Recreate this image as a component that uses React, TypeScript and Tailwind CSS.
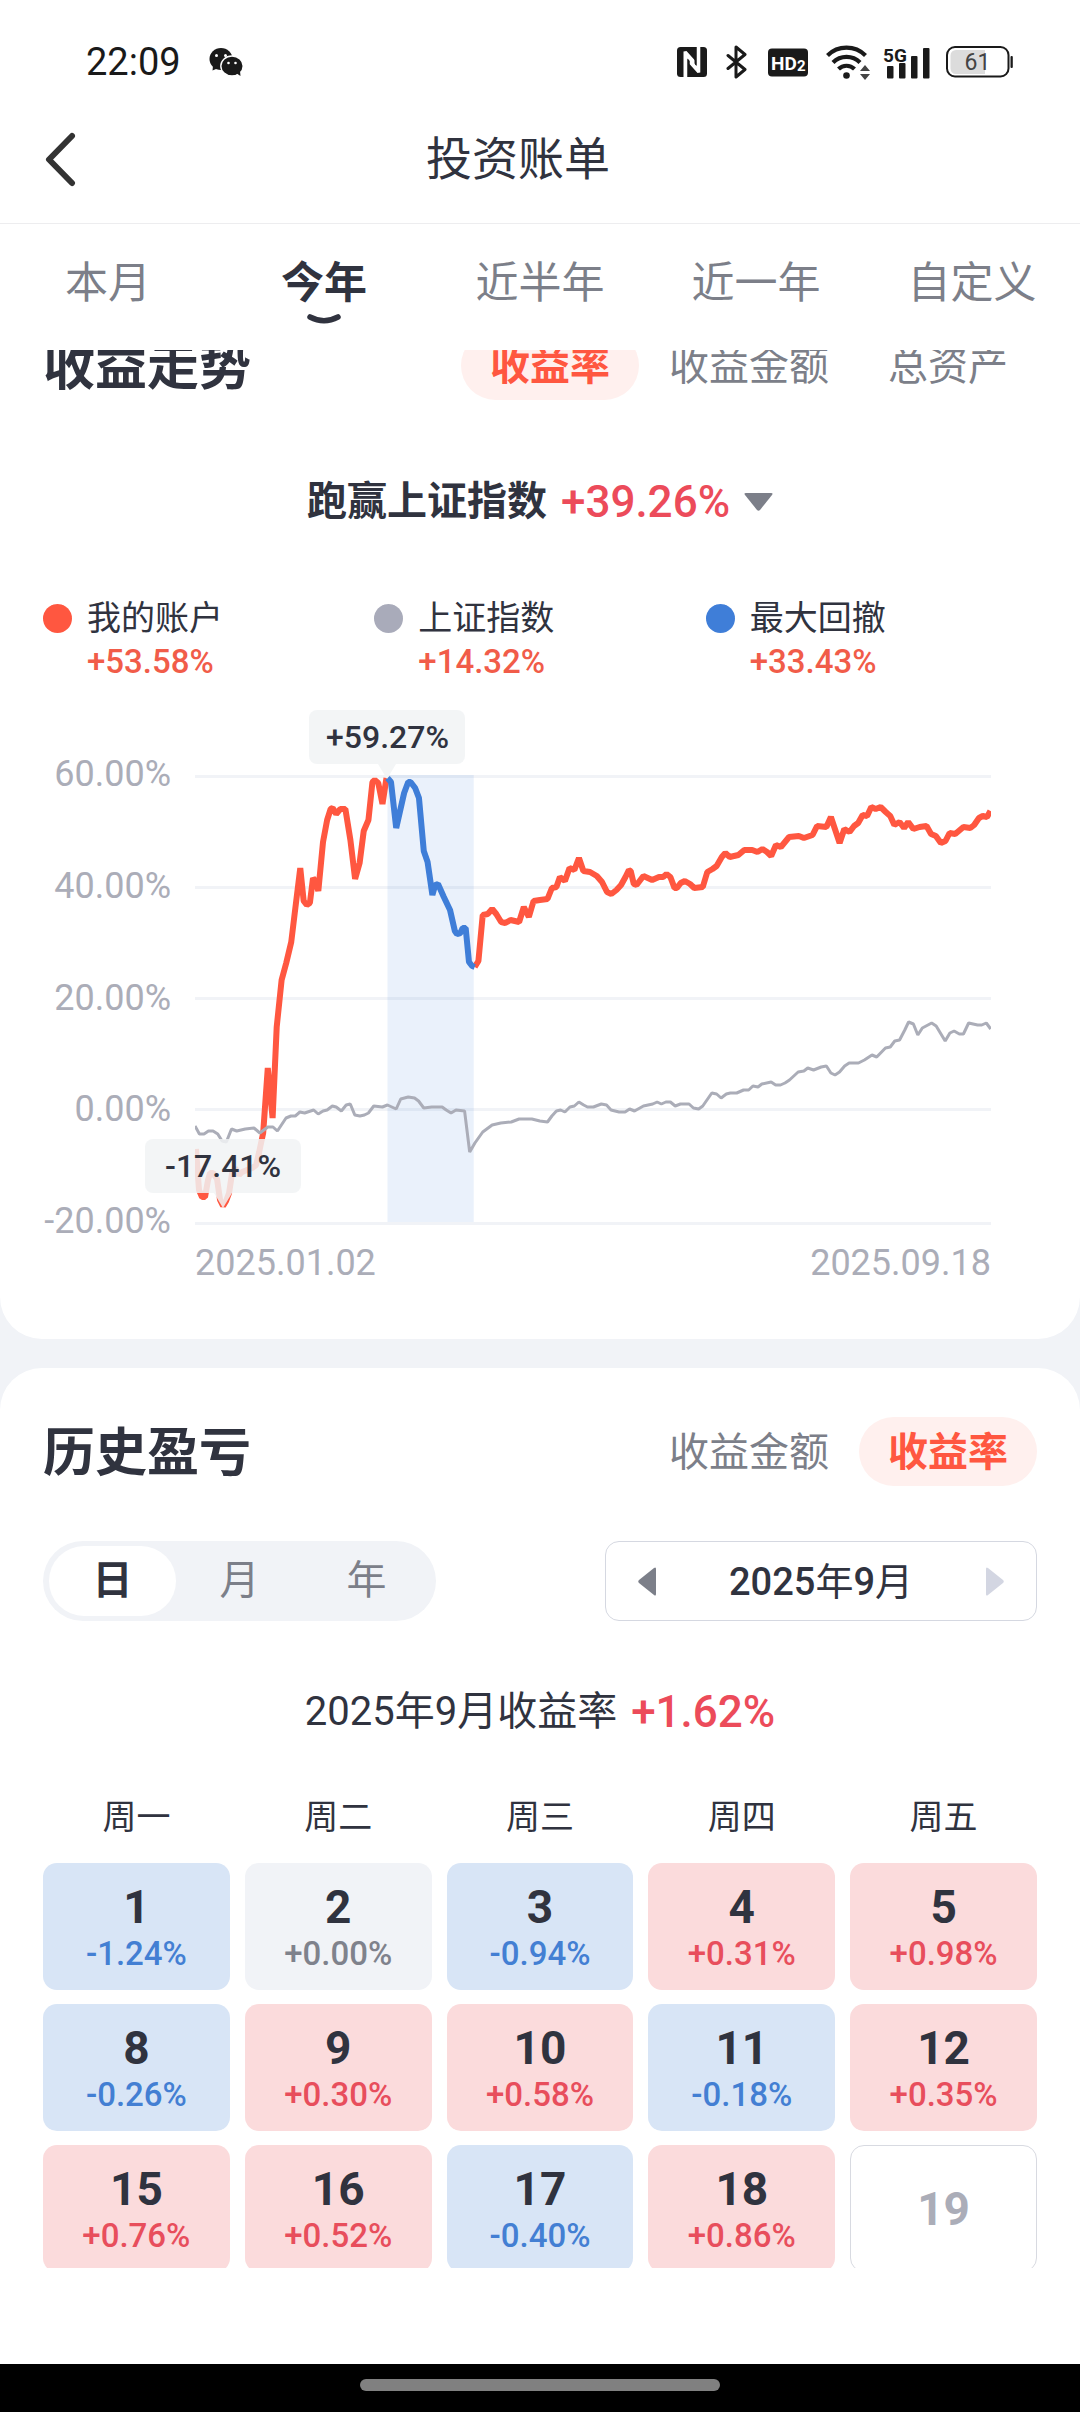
import React, { useState } from 'react';
import clsx from 'clsx';

type Tone = 'up' | 'down' | 'flat' | 'none';

interface Day {
    day: number;
    rate?: string;
    tone: Tone;
}

const RANGES = ['本月', '今年', '近半年', '近一年', '自定义'];

const LEGEND = [
    { name: '我的账户', value: '+53.58%', dot: 'bg-[#ff5740]' },
    { name: '上证指数', value: '+14.32%', dot: 'bg-[#a9abba]' },
    { name: '最大回撤', value: '+33.43%', dot: 'bg-[#3f7ed8]' },
];

const Y_LABELS = ['60.00%', '40.00%', '20.00%', '0.00%', '-20.00%'];
const GRID_Y = [1.5, 112.5, 223.5, 334.5, 448.5];

const WEEKDAYS = ['周一', '周二', '周三', '周四', '周五'];

const WEEKS: Day[][] = [
    [
        { day: 1, rate: '-1.24%', tone: 'down' },
        { day: 2, rate: '+0.00%', tone: 'flat' },
        { day: 3, rate: '-0.94%', tone: 'down' },
        { day: 4, rate: '+0.31%', tone: 'up' },
        { day: 5, rate: '+0.98%', tone: 'up' },
    ],
    [
        { day: 8, rate: '-0.26%', tone: 'down' },
        { day: 9, rate: '+0.30%', tone: 'up' },
        { day: 10, rate: '+0.58%', tone: 'up' },
        { day: 11, rate: '-0.18%', tone: 'down' },
        { day: 12, rate: '+0.35%', tone: 'up' },
    ],
    [
        { day: 15, rate: '+0.76%', tone: 'up' },
        { day: 16, rate: '+0.52%', tone: 'up' },
        { day: 17, rate: '-0.40%', tone: 'down' },
        { day: 18, rate: '+0.86%', tone: 'up' },
        { day: 19, tone: 'none' },
    ],
];

const CELL_TONE: Record<Tone, string> = {
    up: 'bg-[#fbdbdc] pt-1',
    down: 'bg-[#d8e5f6] pt-1',
    flat: 'bg-[#f1f3f7] pt-1',
    none: 'border border-[#d8dae1]',
};

const RATE_TONE: Record<Tone, string> = {
    up: 'text-[#e84e5c]',
    down: 'text-[#437fd3]',
    flat: 'text-[#7f828c]',
    none: '',
};

// Chart coordinates live in a 794 x 450 box
const CHART_W = 794;
const CHART_H = 450;

const ACCOUNT_BEFORE =
    '1,374 4,415 7,422 10,422 13,405 15,398 18,398 22,404 25,425 28,431 31,426 34,418 37,398 40,393 44,400 47,397 57,393 61,390 64,377 68,358 72.6,293 77.4,343 81.5,252 86.4,205 91,188 96,167 99.5,138 105,93 108.4,126 111.5,130 114.6,128 117.7,103 120,106 123,116 127.7,67 131.8,45 135.3,34 137.3,33 140.8,39 145,34 150,34 155,65 159.7,104 164.2,88 168.3,56 173,45 177,7 179.3,5 182.8,8 187,29 191,3';

const ACCOUNT_DRAWDOWN =
    '192,3 195.5,7 200.7,53 208.6,18 212.7,7 215,7 219.6,13 223.4,23 228.2,76 232,87 236.8,120 239.6,110 242.4,109 248.2,122 254.4,135 259.2,156 261.3,159 264.7,158 267,153 270,153 273.3,187 276.4,191 279,192';

const ACCOUNT_AFTER =
    '279,192 282.7,186 287,140 292,139 296.4,134 300.5,139 305.4,147 309.5,148 314.7,145 323.3,147 328,132 333,142 337.7,126 344,125 351.6,124 356,113 360.5,112 364,102 369,106 373.6,93 378.4,95 383,83 387.4,96 394,97 400.8,101 406,107 411,117 415.3,119 420.4,115 425,110 429.4,102 432.8,95 434.6,96 437.7,109 440.4,110 447.3,101 456,105 462.8,102 467,102 470.4,99 474.2,102 478.3,113 480.7,113 484.5,108 488.6,106 493.8,109 498,113 506.5,112 511,97 516.2,94 520.3,91 525.5,82 529,78 533.4,82 542,80 547.9,75 555.8,75 561,77 566,74 570.6,77 574.7,81 579.5,70 584.4,72 592.6,62 602.3,61 607.4,63 616,60 620.5,51 629.8,52 634.3,42 643,68 647.7,54 652.9,57 657.4,51 661.5,48 666,40 670.4,41 674.6,32 679,34 683.9,32 689,37 693.5,41 697.6,50 702.8,47 707.3,53 711.4,47 716.6,54 722.8,52 729.7,51 734.2,59 739,61 744,68 748.6,66 752.7,58 758.3,59 766.5,52 773.4,53 777.2,50 782,43 785.8,41 790,42 793.4,36';

const INDEX_LINE =
    '0,351 4.4,359 9,359 13.4,356 18,356 22.7,359 27,366 31.3,367 36.4,354 41.6,356 50.2,354 58.8,353 64.7,358 72.6,352 77.8,352 82.2,356 90.8,343 95.7,341 100,341 104.6,337 109.4,338 118.4,335 122.9,339 127.7,336 131.8,335 137,331 140.8,332 146,336 150.8,330 154.9,329 159.4,340 164.5,341 169,340 173,338 178.3,331 186.9,332 192,330 200.7,334 205.2,324 212.7,322 219,323 223,326 228.2,333 236.2,332 246.5,332 250.6,335 255.4,338 260.3,335 268.9,336 274,377 279.2,368 287,357 296.4,350 305,348 315.4,347 323.3,344 336,344 344,346 351.6,347 356,341 360.5,336 364.7,335 369,337 374,332 378.4,331 382.9,327 387.7,330 391.5,332 397.4,332 405.3,329 410.5,330 415,335 423,337 429,337 433.5,334 438.4,336 447.3,331 456.6,329 461,327 465.2,329 469.7,327 474.2,327 479,331 484.2,329 492.8,329 497.2,333 502.4,334 506.5,331 515.5,318 520.3,319 524.8,323 530,319 534,318 540.3,318 547.2,315 552.3,315 556.5,311 561.6,312 565.4,309 574.7,307 579.2,310 584,310 588.5,308 593,305 601.6,297 607.4,296 611.2,293 617,295 624.6,292 629.8,291 634.3,298 638.4,300 642.9,297 648,291 652.5,288 661.8,288 667.7,285 675.3,280 680,282 688.7,273 693.5,272 698,266 702.8,265 708,255 711.8,247 716.6,249 721,260 725.5,253 734.8,248 739.3,251 748.3,266 753,258 757.2,256 762.4,259 766.5,259 771.7,248 780.6,250 784.8,250 789.3,248 793.7,254';

function StatusBar() {
    return (
        <div className="flex h-[94px] items-center justify-between pt-[30px] pr-[67px] pl-[86px] text-[#1a1a1a]">
            <div className="flex items-center gap-7">
                <span className="text-[38px] leading-none">22:09</span>
                <svg width="34" height="30" viewBox="0 0 34 30">
                    <ellipse cx="12" cy="12" rx="11.5" ry="11" fill="#1a1a1a" />
                    <path d="M4 19l-.5 4.5 6-2.5z" fill="#1a1a1a" />
                    <ellipse cx="23" cy="19" rx="11.2" ry="10" fill="#1a1a1a" stroke="#fff" strokeWidth="1.4" />
                    <path d="M27 26l4.5 3-.5-5z" fill="#1a1a1a" />
                    <circle cx="7.5" cy="8.5" r="1.5" fill="#fff" />
                    <circle cx="16.500" cy="8.5" r="1.5" fill="#fff" />
                    <circle cx="19.5" cy="16" r="1.3" fill="#fff" />
                    <circle cx="26.5" cy="16" r="1.3" fill="#fff" />
                </svg>
            </div>
            <div className="flex items-center gap-4">
                {/* NFC */}
                <svg width="33" height="30" viewBox="0 0 33 30">
                    <rect width="30" height="30" rx="3.5" fill="#1a1a1a" />
                    <path d="M6.5 30V4.500l3-.5L18 13.500V19l-7.500-7.500V30z" fill="#fff" />
                    <path d="M23.300 0v25.500l-2.800.5L12.500 17v-5.500l7 7.500V0z" fill="#fff" />
                    <path d="M10.500 30V12l2 2v16zM17.500 0v16.500l2 2V0z" fill="#1a1a1a" />
                </svg>
                {/* Bluetooth */}
                <svg width="26" height="34" viewBox="0 0 26 34" fill="none" stroke="#1a1a1a" strokeWidth="3" strokeLinejoin="round" strokeLinecap="round">
                    <path d="M2 10.500l17 14-9 7.500V2l9 7.500-17 14" />
                </svg>
                {/* HD2 */}
                <svg width="40" height="30" viewBox="0 0 40 30">
                    <rect y="1.500" width="40" height="28" rx="4" fill="#1a1a1a" />
                    <text x="3" y="23" fill="#fff" fontFamily="Roboto, sans-serif" fontWeight="700" fontSize="19">HD</text>
                    <text x="29" y="24" fill="#fff" fontFamily="Roboto, sans-serif" fontWeight="700" fontSize="15">2</text>
                </svg>
                {/* Wi-Fi */}
                <svg width="44" height="36" viewBox="-2 0 44 36" className="overflow-visible">
                    <g fill="none" stroke="#1a1a1a" strokeWidth="4.200">
                        <path d="M1.500 11.500a27 27 0 0 1 38 0" />
                        <path d="M7 18.500a19 19 0 0 1 27 0" />
                        <path d="M12.500 25a11.500 11.500 0 0 1 16 0" />
                    </g>
                    <circle cx="20.500" cy="31.500" r="3.300" fill="#1a1a1a" />
                    <path d="M34 27l5-6 5 6zM34 30h10l-5 6z" fill="#444" />
                </svg>
                {/* Signal */}
                <svg width="46" height="34" viewBox="0 0 46 34" fill="#1a1a1a" className="overflow-visible">
                    <text x="-1" y="17" fontFamily="Roboto, sans-serif" fontWeight="700" fontSize="19">5G</text>
                    <rect x="3" y="21" width="6.500" height="12.500" rx="1" />
                    <rect x="15" y="18" width="6.500" height="15.500" rx="1" />
                    <rect x="27" y="11" width="6.500" height="22.500" rx="1" />
                    <rect x="39" y="3" width="6.500" height="30.500" rx="1" />
                </svg>
                {/* Battery */}
                <svg width="67" height="32" viewBox="0 0 67 32">
                    <rect x="1" y="1" width="61.500" height="29.500" rx="8" fill="none" stroke="#1a1a1a" strokeWidth="2" />
                    <path d="M10 4h29v24H10a5.500 5.500 0 0 1-5.500-5.500v-13A5.500 5.500 0 0 1 10 4z" fill="#dcdcdc" />
                    <rect x="64.500" y="10" width="2.300" height="12" rx="1" fill="#1a1a1a" />
                    <text x="31.500" y="24" textAnchor="middle" fill="#444" fontFamily="Roboto, sans-serif" fontSize="23">61</text>
                </svg>
            </div>
        </div>
    );
}

function Pills({ options, value, onChange }: { options: string[]; value: string; onChange: (v: string) => void }) {
    return (
        <div className="flex gap-px">
            {options.map((o) => (
                <button
                    key={o}
                    type="button"
                    onClick={() => onChange(o)}
                    className={clsx(
                        'h-[69px] rounded-full px-[29px] pt-0.5 text-[40px] leading-[56px]',
                        o === value ? 'bg-[#fff0ee] font-bold text-[#ff5740]' : 'text-[#7c7f89]'
                    )}
                >
                    {o}
                </button>
            ))}
        </div>
    );
}

function Tip({ x, className, children }: { x: number; className: string; children: React.ReactNode }) {
    return (
        <div
            className={clsx('absolute flex -translate-x-1/2 flex-col items-center', className)}
            style={{ left: `${(x / CHART_W) * 100}%` }}
        >
            <div className="flex h-[54px] w-[156px] items-center justify-center rounded-lg bg-[#f1f3f5]/85 text-[32px] font-medium">
                {children}
            </div>
            <svg width="18" height="15" viewBox="0 0 18 15">
                <path d="M0 0h18L9 15z" fill="#f1f3f5" fillOpacity="0.85" />
            </svg>
        </div>
    );
}

function TrendChart() {
    return (
        <div className="mt-[91px] flex">
            <div className="-mt-[23px] -mb-[18px] mr-6 flex w-32 flex-col justify-between text-right text-4xl text-[#abadb8]">
                {Y_LABELS.map((l) => (
                    <span key={l} className="leading-[44px] whitespace-nowrap">{l}</span>
                ))}
            </div>
            <div className="relative mr-[46px] flex-1">
                <svg className="block h-[450px] w-full" viewBox={`0 0 ${CHART_W} ${CHART_H}`} preserveAspectRatio="none">
                    {GRID_Y.map((y) => (
                        <line key={y} x1="0" x2={CHART_W} y1={y} y2={y} stroke="#f1f3f7" strokeWidth="3" />
                    ))}
                    <rect x="192" y="0" width="86" height="447" fill="#3f7ed8" fillOpacity="0.11" />
                    <g fill="none" strokeWidth="6" strokeLinejoin="bevel">
                        <polyline points={ACCOUNT_BEFORE} stroke="#ff5740" />
                        <polyline points={ACCOUNT_AFTER} stroke="#ff5740" />
                        <polyline points={ACCOUNT_DRAWDOWN} stroke="#3f7ed8" />
                        <polyline points={INDEX_LINE} stroke="#abadb8" strokeWidth="3" />
                    </g>
                </svg>
                <Tip x={192} className="-top-[65px]">+59.27%</Tip>
                <Tip x={28} className="top-[364px]">-17.41%</Tip>
            </div>
        </div>
    );
}

export default function App() {
    const [range, setRange] = useState('今年');
    const [trendTab, setTrendTab] = useState('收益率');
    const [historyTab, setHistoryTab] = useState('收益率');
    const [unit, setUnit] = useState('日');

    return (
        <div className="flex h-screen flex-col overflow-hidden bg-white font-[Roboto,'Noto_Sans_CJK_SC',sans-serif] text-[#30333f]">
            <StatusBar />

            {/* Title bar */}
            <header className="grid h-[130px] grid-cols-[1fr_auto_1fr] items-center border-b border-[#ededef] pr-[87px] pl-[43px]">
                <button type="button" aria-label="返回" className="justify-self-start">
                    <svg width="34" height="56" viewBox="0 0 34 56" fill="none" stroke="#333" strokeWidth="6" strokeLinecap="round" strokeLinejoin="round">
                        <path d="M29 5L6 28.500 29 52" />
                    </svg>
                </button>
                <h1 className="text-[46px] leading-[64px]">投资账单</h1>
            </header>

            {/* Range tabs */}
            <nav className="grid h-[126px] shrink-0 grid-cols-5 pt-[29px]">
                {RANGES.map((r) => (
                    <button
                        key={r}
                        type="button"
                        onClick={() => setRange(r)}
                        className={clsx(
                            'flex flex-col items-center text-[43px] leading-[60px]',
                            r === range ? 'font-bold' : 'text-[#7c7f89]'
                        )}
                    >
                        {r}
                        {r === range && (
                            <svg width="36" height="14" viewBox="0 0 36 14" fill="none" stroke="#30333f" strokeWidth="5.500" strokeLinecap="round">
                                <path d="M4 4q14 7.500 28 0" />
                            </svg>
                        )}
                    </button>
                ))}
            </nav>

            <main className="min-h-0 flex-1 overflow-y-auto bg-[#f1f3f7] [scrollbar-width:none]">
                {/* Trend */}
                <section className="-mt-[19px] rounded-b-[42px] bg-white px-[43px] pb-[54px]">
                    <div className="flex items-center justify-between">
                        <h2 className="pt-1 text-[52px] leading-[60px] font-bold">收益走势</h2>
                        <Pills options={['收益率', '收益金额', '总资产']} value={trendTab} onChange={setTrendTab} />
                    </div>

                    <button type="button" className="mx-auto mt-[74px] flex items-center gap-[14px] leading-[56px]">
                        <span className="text-[40px] font-bold">跑赢上证指数</span>
                        <span className="text-[44px] font-medium text-[#ec4b5a]">+39.26%</span>
                        <svg width="29" height="18" viewBox="0 0 29 18">
                            <path d="M2 0h25q2.500 0 1 2L16 17q-1.500 1.500-3 0L1 2Q-.5 0 2 0z" fill="#7c7f89" />
                        </svg>
                    </button>

                    <ul className="mt-[66px] grid grid-cols-3">
                        {LEGEND.map((item) => (
                            <li key={item.name} className="grid grid-cols-[29px_1fr] items-center gap-x-[15px] leading-[44px]">
                                <i className={clsx('h-[29px] rounded-full', item.dot)} />
                                <span className="text-[34px]">{item.name}</span>
                                <span className="col-start-2 text-[33px] font-medium text-[#f15c49]">{item.value}</span>
                            </li>
                        ))}
                    </ul>

                    <TrendChart />

                    <div className="mt-4 mr-[46px] ml-[152px] flex justify-between text-4xl text-[#abadb8]">
                        <span className="leading-[44px]">2025.01.02</span>
                        <span className="leading-[44px]">2025.09.18</span>
                    </div>
                </section>

                {/* History */}
                <section className="mt-[29px] rounded-t-[42px] bg-white px-[43px] pt-[49px]">
                    <div className="flex items-center justify-between">
                        <h2 className="pt-1 text-[52px] leading-[60px] font-bold">历史盈亏</h2>
                        <Pills options={['收益金额', '收益率']} value={historyTab} onChange={setHistoryTab} />
                    </div>

                    <div className="mt-[55px] flex items-center justify-between">
                        <div className="flex h-20 rounded-full bg-[#f1f3f7] px-1.5 py-[5px]">
                            {['日', '月', '年'].map((u) => (
                                <button
                                    key={u}
                                    type="button"
                                    onClick={() => setUnit(u)}
                                    className={clsx(
                                        'w-[127px] rounded-full text-[40px] leading-[56px]',
                                        u === unit ? 'bg-white font-bold' : 'text-[#7c7f89]'
                                    )}
                                >
                                    {u}
                                </button>
                            ))}
                        </div>
                        <div className="flex h-20 w-[432px] items-center justify-between rounded-[14px] border border-[#d5d8e1] px-8">
                            <button type="button" aria-label="上个月">
                                <svg width="18" height="29" viewBox="0 0 18 29">
                                    <path d="M18 2v25q0 2.500-2 1L1 16q-1.500-1.500 0-3L16 1q2-1.500 2 1z" fill="#7c7f89" />
                                </svg>
                            </button>
                            <span className="pt-0.5 text-[38px] leading-[56px] font-medium">
                                2025<span className="font-normal">年</span>9<span className="font-normal">月</span>
                            </span>
                            <button type="button" aria-label="下个月" disabled>
                                <svg width="18" height="29" viewBox="0 0 18 29">
                                    <path d="M0 2v25q0 2.500 2 1l15-12q1.500-1.500 0-3L2 1Q0-.5 0 2z" fill="#d3d6e2" />
                                </svg>
                            </button>
                        </div>
                    </div>

                    <p className="mt-[63px] flex items-center justify-center gap-[14px] leading-[56px]">
                        <span className="text-[40px]">2025年9月收益率</span>
                        <span className="text-[44px] font-medium text-[#ec4b5a]">+1.62%</span>
                    </p>

                    <div className="-mx-[15px] mt-10">
                        <table className="w-full table-fixed border-separate border-spacing-x-[15px] border-spacing-y-[14px] text-center">
                            <thead>
                                <tr>
                                    {WEEKDAYS.map((w) => (
                                        <th key={w} className="h-[55px] pt-px align-top text-[34px] leading-[44px] font-normal">{w}</th>
                                    ))}
                                </tr>
                            </thead>
                            <tbody>
                                {WEEKS.map((week) => (
                                    <tr key={week[0].day}>
                                        {week.map((d) => (
                                            <td key={d.day} className={clsx('h-[127px] rounded-[14px]', CELL_TONE[d.tone])}>
                                                <div className={clsx('text-[46px] leading-[50px] font-bold', d.tone === 'none' && 'text-[#abadb8]')}>
                                                    {d.day}
                                                </div>
                                                {d.rate && (
                                                    <div className={clsx('text-[33px] leading-[44px] font-medium', RATE_TONE[d.tone])}>{d.rate}</div>
                                                )}
                                            </td>
                                        ))}
                                    </tr>
                                ))}
                            </tbody>
                        </table>
                    </div>
                </section>
            </main>

            {/* Bottom safe area and gesture bar */}
            <div className="h-24 shrink-0 bg-white" />
            <div className="flex h-12 shrink-0 items-start justify-center bg-black pt-[15px]">
                <div className="h-3 w-1/3 rounded-full bg-[#808080]" />
            </div>
        </div>
    );
}
